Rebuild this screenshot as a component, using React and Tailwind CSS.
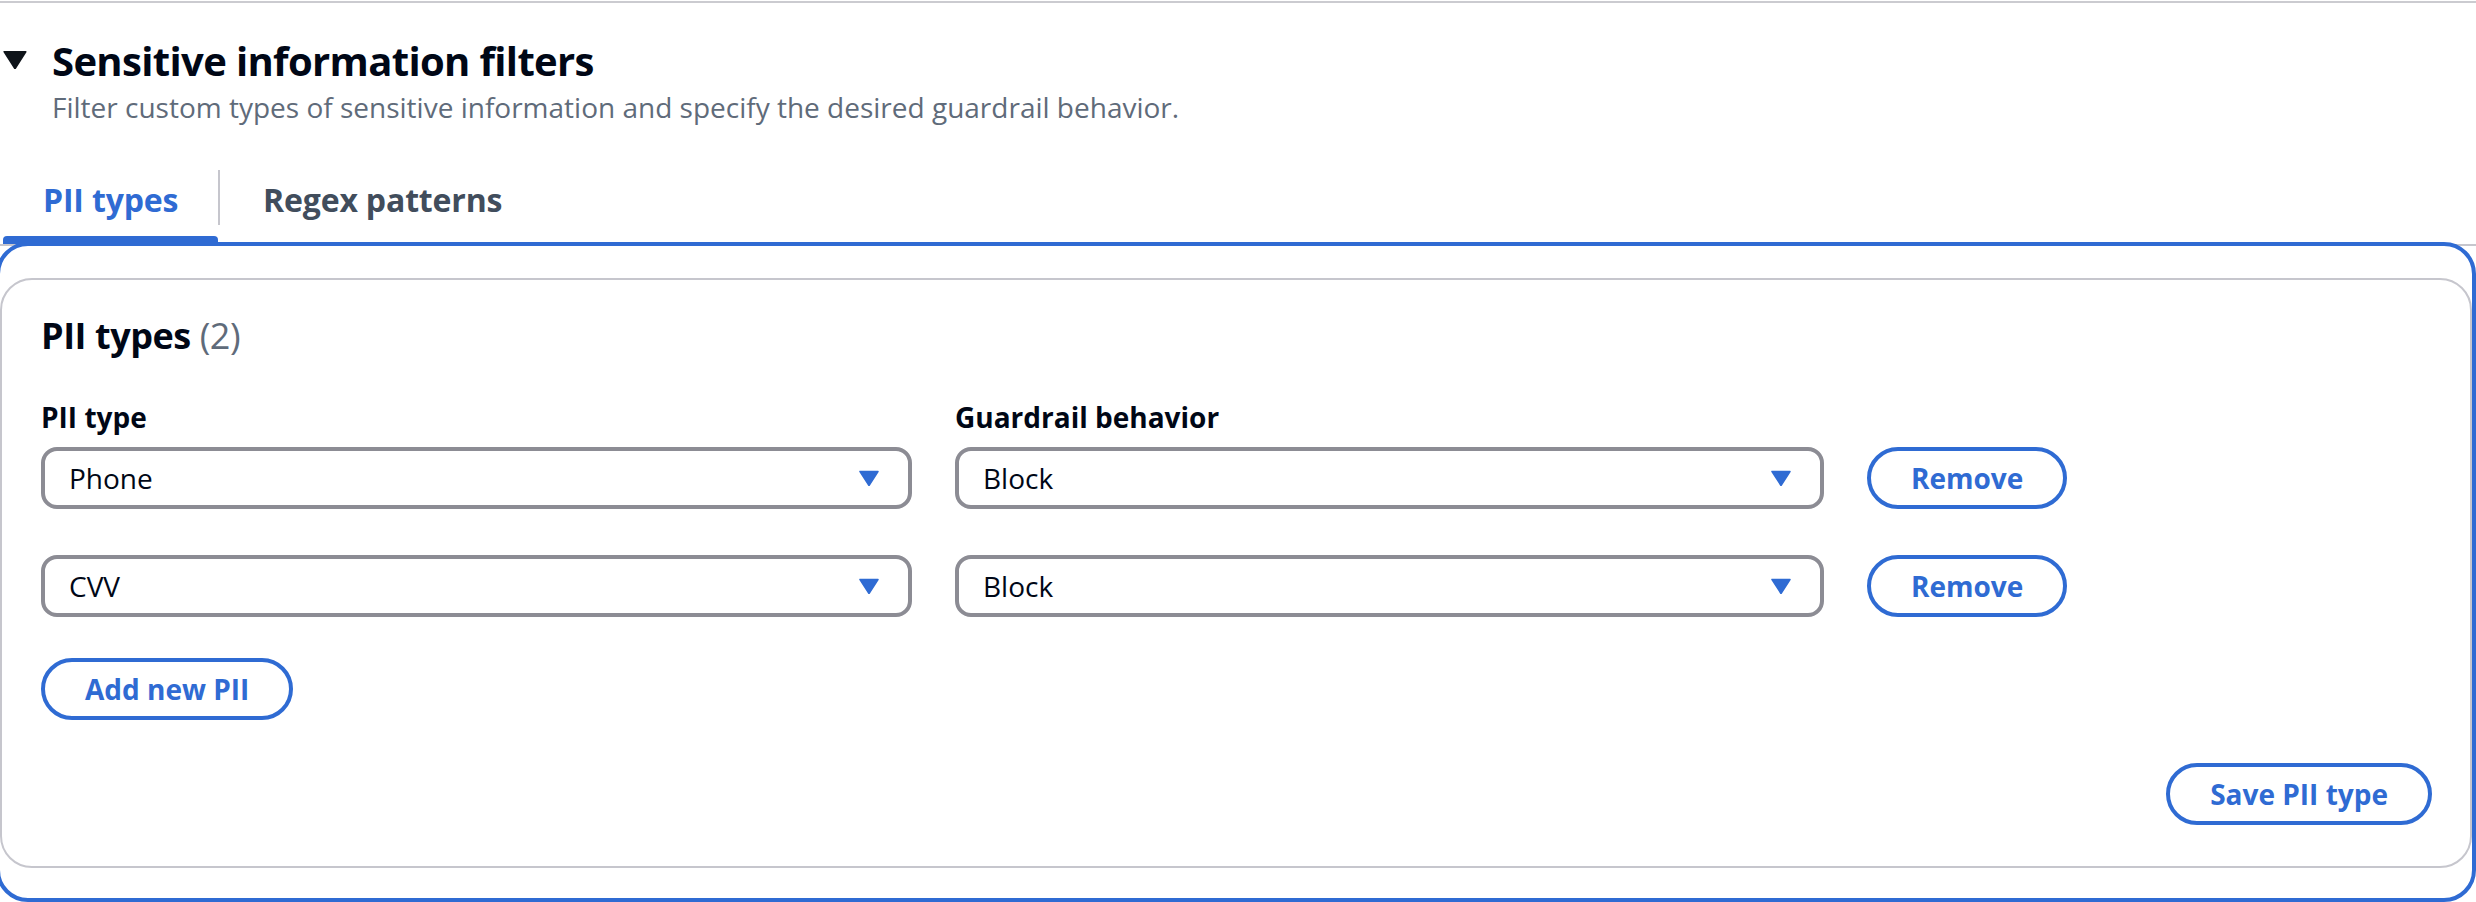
import React from 'react';

const Caret = ({ className }) => (
  <svg viewBox="0 0 20 16" className={className}>
    <path d="M1 1.5h18L10 15.5z" fill="currentColor" strokeLinejoin="round" stroke="currentColor" strokeWidth="1.5" />
  </svg>
);

const SelectBox = ({ value }) => (
  <div className="h-[62px] rounded-[16px] border-4 border-[#8c8c94] bg-white flex items-center justify-between pl-[24px] pr-[29px]">
    <span className="text-[28px] leading-[40px] text-[#000716]">{value}</span>
    <Caret className="w-[20px] h-[16px] text-[#2f6bd3]" />
  </div>
);

const PillButton = ({ children }) => (
  <button className="h-[62px] rounded-full border-4 border-[#2f6bd3] bg-white px-[40px] text-[28px] leading-[40px] font-bold text-[#2f6bd3]">
    {children}
  </button>
);

const rows = [
  { pii: 'Phone', behavior: 'Block' },
  { pii: 'CVV', behavior: 'Block' }
];

export default function App() {
  return (
    <div className="w-[2476px] h-[902px] overflow-hidden bg-white font-['Open_Sans',sans-serif]">
      <div className="h-[1px]" />
      <div className="h-[2px] bg-[#cbcbd0]" />

      <div className="pt-[34px] flex items-start">
        <div className="w-[52px] pl-[3px] pt-[13px]">
          <Caret className="w-[24px] h-[19px] text-[#0f141a]" />
        </div>
        <div>
          <h2 className="text-[40px] leading-[48px] font-bold tracking-[-0.65px] text-[#000716]">Sensitive information filters</h2>
          <p className="mt-[2px] text-[28px] leading-[40px] text-[#5f6b7a]">
            Filter custom types of sensitive information and specify the desired guardrail behavior.
          </p>
        </div>
      </div>

      {/* tabs */}
      <div className="mt-[43px] flex border-b-2 border-[#c6c6cd]">
        <div className="relative w-[220px] h-[74px]">
          <div className="h-[55px] border-r-2 border-[#c6c6cd] pt-[10px] pl-[43px] text-[32px] leading-[40px] font-bold tracking-[-0.16px] text-[#2f6bd3]">
            PII types
          </div>
          <div className="absolute left-[3px] right-[2px] bottom-0 h-[8px] rounded-t-[4px] bg-[#2f6bd3] z-10" />
        </div>
        <div className="h-[74px] pl-[43px] pt-[10px] text-[32px] leading-[40px] font-bold tracking-[-0.16px] text-[#414d5c]">
          Regex patterns
        </div>
      </div>

      {/* focused tab panel */}
      <div className="-mt-[4px] -ml-[4px] w-[2480px] rounded-[32px] border-4 border-[#2f6bd3] pt-[32px] pb-[30px]">
        <div className="w-[2472px] rounded-[32px] border-2 border-[#c6c6cd] pl-[39px] pr-[38px] pt-[34px] pb-[41px]">
          <h3 className="text-[36px] leading-[44px] font-bold tracking-[-0.45px] text-[#000716]">
            PII types <span className="font-normal text-[#5f6b7a]">(2)</span>
          </h3>

          <div className="mt-[39px] grid grid-cols-[871px_869px_auto] gap-x-[43px]">
            <div className="text-[28px] leading-[40px] font-bold text-[#000716]">PII type</div>
            <div className="text-[28px] leading-[40px] font-bold text-[#000716]">Guardrail behavior</div>
            <div />
          </div>

          <div className="mt-[10px] flex flex-col gap-[46px]">
            {rows.map((row, i) => (
              <div key={i} className="grid grid-cols-[871px_869px_auto] gap-x-[43px] items-center">
                <SelectBox value={row.pii} />
                <SelectBox value={row.behavior} />
                <div>
                  <PillButton>Remove</PillButton>
                </div>
              </div>
            ))}
          </div>

          <div className="mt-[41px]">
            <PillButton>Add new PII</PillButton>
          </div>

          <div className="mt-[43px] flex justify-end">
            <PillButton>Save PII type</PillButton>
          </div>
        </div>
      </div>
    </div>
  );
}
